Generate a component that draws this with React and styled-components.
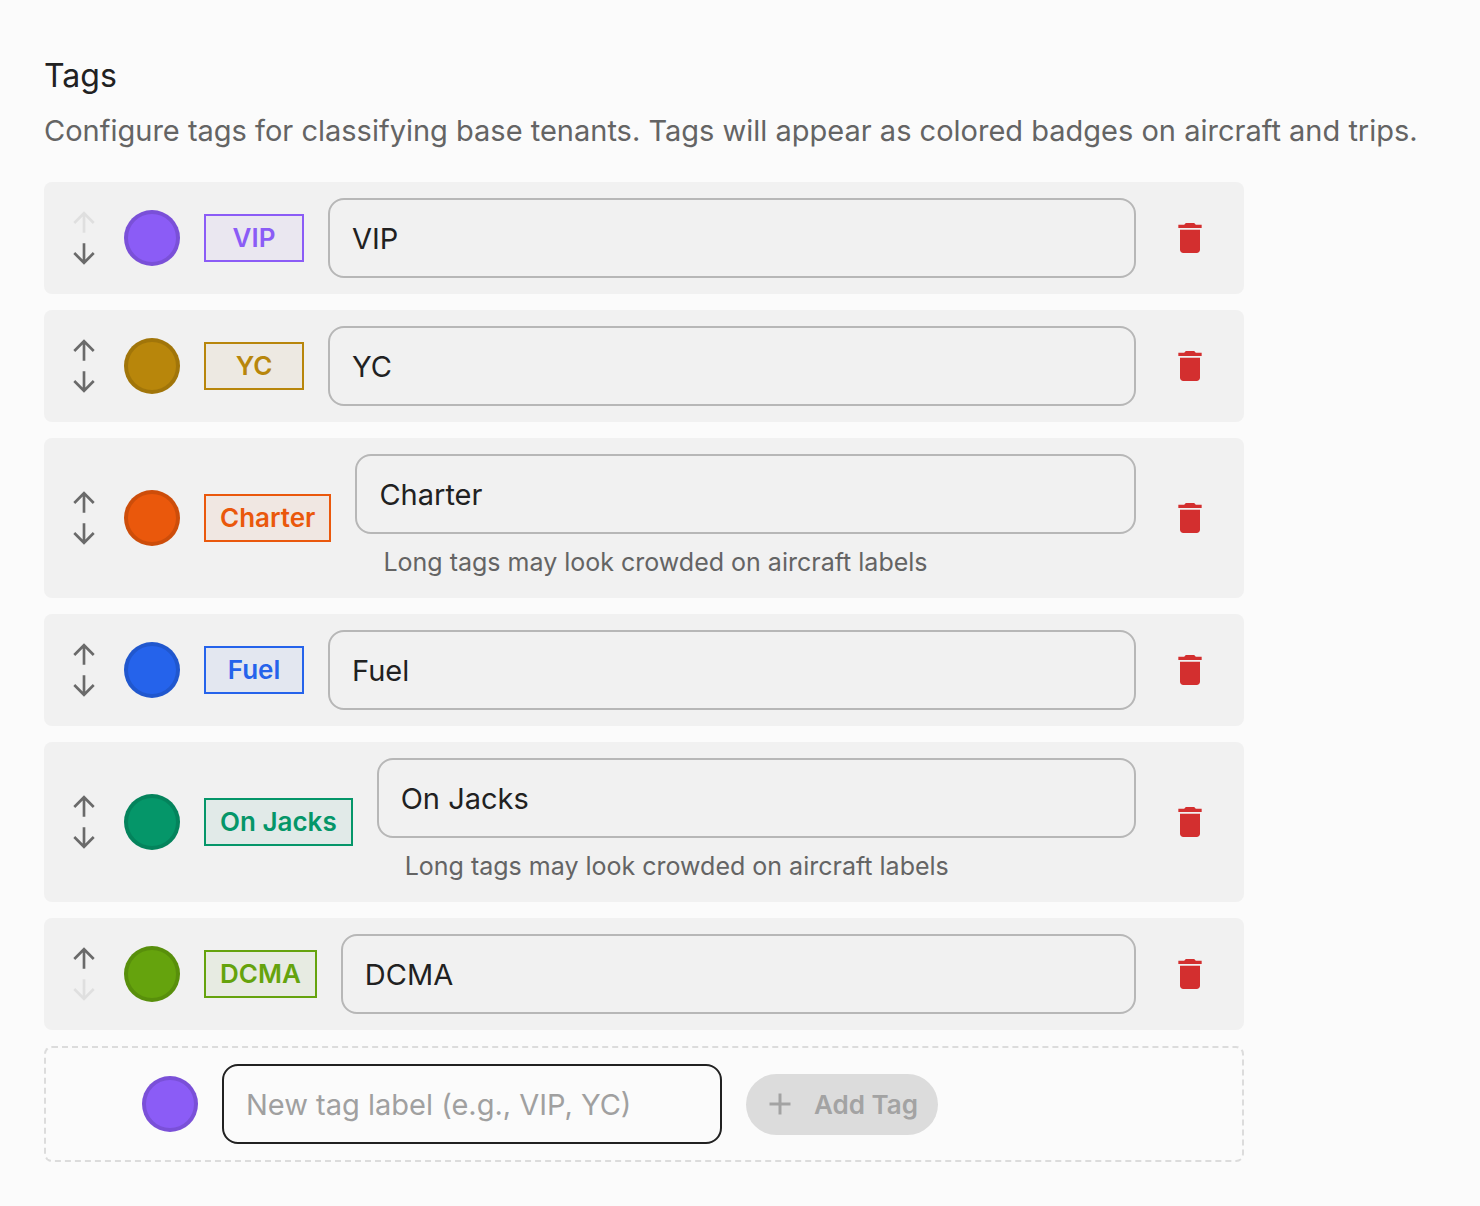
import React, { useState } from "react";
import styled, { createGlobalStyle } from "styled-components";

const GlobalStyle = createGlobalStyle`
  *, *::before, *::after { box-sizing: border-box; }
  body {
    margin: 0;
    background: #fbfbfb;
    color: #212121;
    font-family: "Inter", "Liberation Sans", sans-serif;
  }
  button, input { font: inherit; color: inherit; }
`;

const Page = styled.main`
  padding: 56px 44px 44px;
`;

const Title = styled.h1`
  margin: 0 0 10px;
  font-size: 32px;
  line-height: 40px;
  font-weight: 400;
`;

const Description = styled.p`
  margin: 0 0 26px;
  font-size: 29px;
  line-height: 50px;
  color: #646464;
`;

const Panel = styled.div`
  display: flex;
  flex-direction: column;
  gap: 16px;
  max-width: 1200px;
`;

const TagList = styled.ul`
  display: flex;
  flex-direction: column;
  gap: 16px;
  margin: 0;
  padding: 0;
  list-style: none;
`;

const TagRow = styled.li`
  display: flex;
  align-items: center;
  gap: 24px;
  padding: 16px 24px;
  border-radius: 8px;
  background: #f1f1f1;
`;

const OrderControls = styled.div`
  display: flex;
  flex-direction: column;
`;

const IconButton = styled.button`
  display: grid;
  place-items: center;
  flex: none;
  width: ${(p) => p.$size}px;
  height: ${(p) => p.$size}px;
  padding: 0;
  border: 0;
  border-radius: 50%;
  background: none;
  color: ${(p) => p.$color};
  cursor: pointer;

  &:disabled {
    color: #dfdfdf;
    cursor: default;
  }
`;

const Icon = styled.svg`
  display: block;
  flex: none;
  width: ${(p) => p.$size}px;
  height: ${(p) => p.$size}px;
  fill: currentColor;
`;

const Swatch = styled.button`
  flex: none;
  width: 56px;
  height: 56px;
  padding: 0;
  border: 4px solid rgba(0, 0, 0, 0.12);
  border-radius: 50%;
  background: ${(p) => p.$color} border-box;
  cursor: pointer;
`;

const Badge = styled.span`
  flex: none;
  min-width: 100px;
  padding: 0 14px;
  border: 2px solid ${(p) => p.$color};
  background: ${(p) => p.$color}10;
  color: ${(p) => p.$color};
  font-size: 26px;
  line-height: 44px;
  font-weight: 600;
  text-align: center;
  white-space: nowrap;
`;

const Field = styled.div`
  flex: 1;
  min-width: 0;
`;

const TextInput = styled.input`
  display: block;
  width: 100%;
  height: 80px;
  padding: 0 22px;
  border: 2px solid ${(p) => (p.$strong ? "#212121" : "#b7b7b7")};
  border-radius: 16px;
  outline: 0;
  background: transparent;
  font-size: 29px;

  &::placeholder {
    color: #a0a0a0;
    opacity: 1;
  }
`;

const HelperText = styled.p`
  margin: 8px 28px 0;
  font-size: 25px;
  line-height: 40px;
  color: #646464;
`;

const NewTagForm = styled.form`
  display: flex;
  align-items: center;
  gap: 24px;
  padding: 16px 24px;
  border: 2px dashed #dcdcdc;
  border-radius: 8px;
`;

const OrderSpacer = styled.div`
  width: 48px;
`;

const NewTagField = styled.div`
  flex: 0 1 500px;
`;

const AddButton = styled.button`
  display: flex;
  align-items: center;
  gap: 16px;
  padding: 6px 20px 6px 16px;
  border: 0;
  border-radius: 32px;
  background: #212121;
  color: #fbfbfb;
  font-size: 26px;
  line-height: 49px;
  font-weight: 600;
  white-space: nowrap;

  &:disabled {
    background: #dcdcdc;
    color: #a3a3a3;
  }
`;

const paths = {
  up: "m4 12 1.41 1.41L11 7.83V20h2V7.83l5.58 5.59L20 12l-8-8z",
  down: "m20 12-1.41-1.41L13 16.17V4h-2v12.17l-5.58-5.59L4 12l8 8z",
  trash:
    "M6 19c0 1.1.9 2 2 2h8c1.1 0 2-.9 2-2V7H6zM19 4h-3.5l-1-1h-5l-1 1H5v2h14z",
  plus: "M19 13h-6v6h-2v-6H5v-2h6V5h2v6h6z",
};

function Glyph({ name, size }) {
  return (
    <Icon viewBox="0 0 24 24" $size={size} aria-hidden="true">
      <path d={paths[name]} />
    </Icon>
  );
}

const LONG_LABEL = 5;

const initialTags = [
  { id: 1, label: "VIP", color: "#8b5cf6" },
  { id: 2, label: "YC", color: "#b8860b" },
  { id: 3, label: "Charter", color: "#ea580c" },
  { id: 4, label: "Fuel", color: "#2563eb" },
  { id: 5, label: "On Jacks", color: "#059669" },
  { id: 6, label: "DCMA", color: "#65a30d" },
];

export default function App() {
  const [tags, setTags] = useState(initialTags);
  const [draft, setDraft] = useState("");

  const rename = (id, label) =>
    setTags(tags.map((t) => (t.id === id ? { ...t, label } : t)));
  const remove = (id) => setTags(tags.filter((t) => t.id !== id));
  const move = (from, to) => {
    const next = [...tags];
    next.splice(to, 0, next.splice(from, 1)[0]);
    setTags(next);
  };
  const add = (e) => {
    e.preventDefault();
    if (!draft.trim()) return;
    setTags([...tags, { id: Date.now(), label: draft.trim(), color: "#8b5cf6" }]);
    setDraft("");
  };

  return (
    <>
      <GlobalStyle />
      <Page>
        <Title>Tags</Title>
        <Description>
          Configure tags for classifying base tenants. Tags will appear as
          colored badges on aircraft and trips.
        </Description>
        <Panel>
          <TagList>
            {tags.map((tag, i) => {
              const long = tag.label.length >= LONG_LABEL;
              return (
                <TagRow key={tag.id}>
                  <OrderControls>
                    <IconButton
                      type="button"
                      $size={32}
                      $color="#6a6a6a"
                      aria-label="Move up"
                      disabled={i === 0}
                      onClick={() => move(i, i - 1)}
                    >
                      <Glyph name="up" size={32} />
                    </IconButton>
                    <IconButton
                      type="button"
                      $size={32}
                      $color="#6a6a6a"
                      aria-label="Move down"
                      disabled={i === tags.length - 1}
                      onClick={() => move(i, i + 1)}
                    >
                      <Glyph name="down" size={32} />
                    </IconButton>
                  </OrderControls>
                  <Swatch type="button" $color={tag.color} aria-label="Tag color" />
                  <Badge $color={tag.color}>{tag.label}</Badge>
                  <Field>
                    <TextInput
                      type="text"
                      aria-label="Tag label"
                      aria-describedby={long ? `helper-${tag.id}` : undefined}
                      value={tag.label}
                      onChange={(e) => rename(tag.id, e.target.value)}
                    />
                    {long && (
                      <HelperText id={`helper-${tag.id}`}>
                        Long tags may look crowded on aircraft labels
                      </HelperText>
                    )}
                  </Field>
                  <IconButton
                    type="button"
                    $size={60}
                    $color="#d32f2f"
                    aria-label="Delete tag"
                    onClick={() => remove(tag.id)}
                  >
                    <Glyph name="trash" size={40} />
                  </IconButton>
                </TagRow>
              );
            })}
          </TagList>
          <NewTagForm onSubmit={add}>
            <OrderSpacer />
            <Swatch type="button" $color="#8b5cf6" aria-label="New tag color" />
            <NewTagField>
              <TextInput
                type="text"
                $strong
                aria-label="New tag label"
                placeholder="New tag label (e.g., VIP, YC)"
                value={draft}
                onChange={(e) => setDraft(e.target.value)}
              />
            </NewTagField>
            <AddButton type="submit" disabled={!draft.trim()}>
              <Glyph name="plus" size={36} />
              Add Tag
            </AddButton>
          </NewTagForm>
        </Panel>
      </Page>
    </>
  );
}
